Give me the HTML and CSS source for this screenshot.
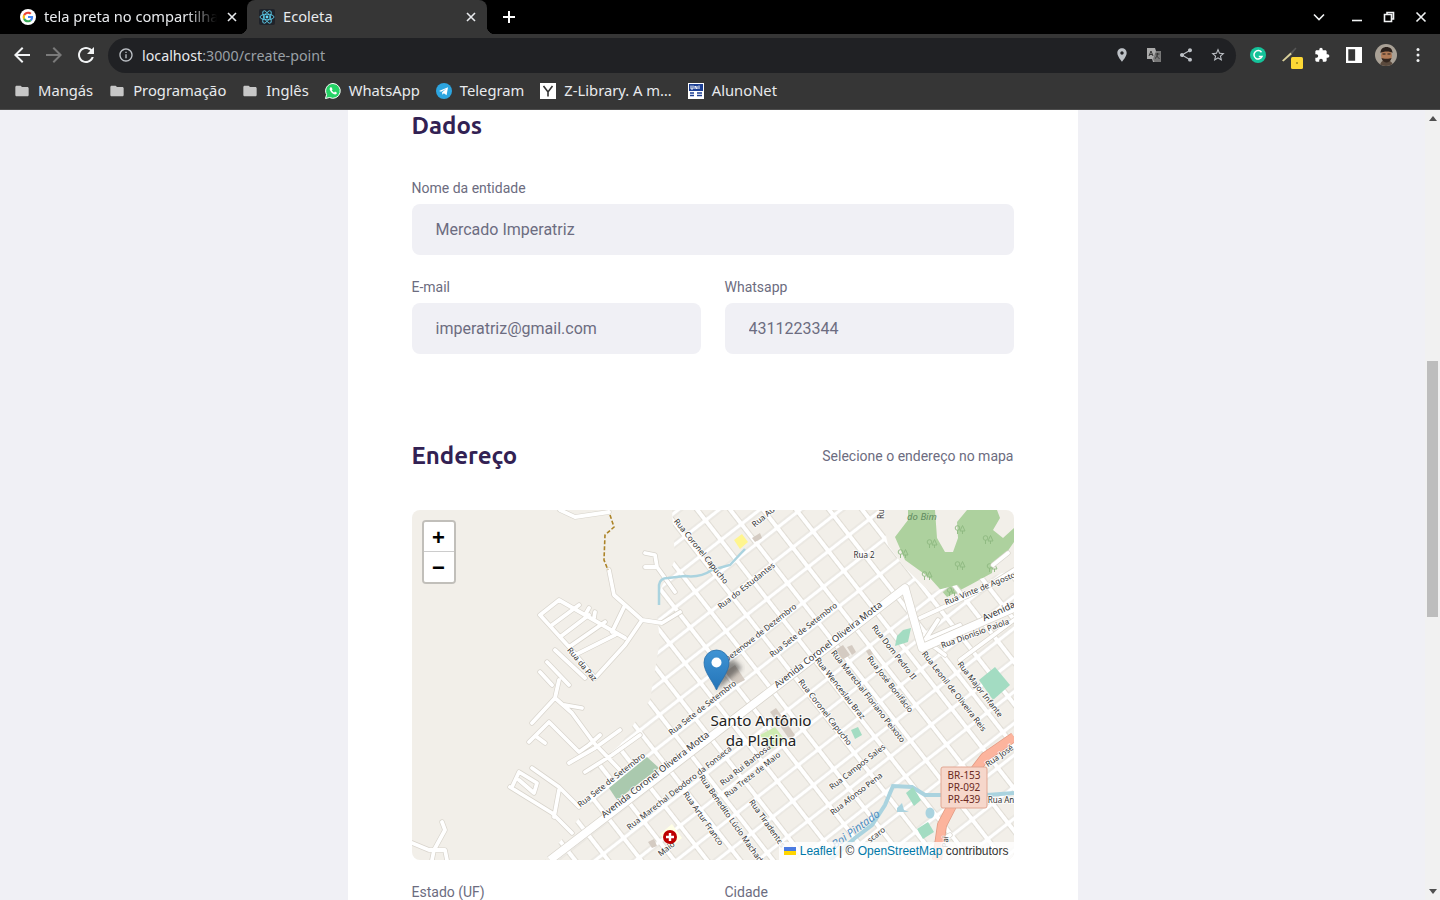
FILE: index.html
```html
<!DOCTYPE html>
<html lang="pt-BR">
<head>
    <meta charset="UTF-8">
    <title>Ecoleta</title>
    <link rel="stylesheet" href="styles.css">
</head>
<body>
    <!-- Browser chrome -->
    <header class="browser">
        <div class="tabstrip">
            <div class="tab">
                <svg class="favicon" viewBox="0 0 48 48"><circle cx="24" cy="24" r="24" fill="#fff"/><g transform="translate(8 8) scale(.667)"><path fill="#EA4335" d="M24 9.5c3.54 0 6.71 1.22 9.21 3.6l6.85-6.85C35.9 2.38 30.47 0 24 0 14.62 0 6.51 5.38 2.56 13.22l7.98 6.19C12.43 13.72 17.74 9.5 24 9.5z"/><path fill="#4285F4" d="M46.98 24.55c0-1.57-.15-3.09-.38-4.55H24v9.02h12.94c-.58 2.96-2.26 5.48-4.78 7.18l7.73 6c4.51-4.18 7.09-10.36 7.09-17.65z"/><path fill="#FBBC05" d="M10.53 28.59c-.48-1.45-.76-2.99-.76-4.59s.27-3.14.76-4.59l-7.98-6.19C.92 16.46 0 20.12 0 24c0 3.88.92 7.54 2.56 10.78l7.97-6.19z"/><path fill="#34A853" d="M24 48c6.48 0 11.93-2.13 15.89-5.81l-7.73-6c-2.15 1.45-4.92 2.3-8.16 2.3-6.26 0-11.57-4.22-13.47-9.91l-7.98 6.19C6.51 42.62 14.62 48 24 48z"/></g></svg>
                <span class="tab-title faded">tela preta no compartilhamento</span>
                <svg class="tab-close" viewBox="0 0 10 10"><path d="M1 1l8 8M9 1L1 9"/></svg>
            </div>
            <div class="tab active">
                <svg class="favicon" viewBox="0 0 16 16"><rect width="16" height="16" rx="2" fill="#20232a"/><g fill="none" stroke="#61dafb" stroke-width=".8"><ellipse cx="8" cy="8" rx="7" ry="2.8"/><ellipse cx="8" cy="8" rx="7" ry="2.8" transform="rotate(60 8 8)"/><ellipse cx="8" cy="8" rx="7" ry="2.8" transform="rotate(120 8 8)"/></g><circle cx="8" cy="8" r="1.4" fill="#61dafb"/></svg>
                <span class="tab-title">Ecoleta</span>
                <svg class="tab-close" viewBox="0 0 10 10"><path d="M1 1l8 8M9 1L1 9"/></svg>
            </div>
            <svg class="new-tab" viewBox="0 0 12 12"><path d="M6 0v12M0 6h12"/></svg>
            <div class="window-controls">
                <svg class="win-icon tabs-menu" viewBox="0 0 12 12"><path d="M1 3.5l5 5 5-5" fill="none"/></svg>
                <svg class="win-icon" viewBox="0 0 12 12"><path d="M1 9.5h10" fill="none"/></svg>
                <svg class="win-icon" viewBox="0 0 12 12"><path d="M4 3V1.500h6.500V8H9M1.500 3.500H8.500V10.500H1.500z" fill="none"/></svg>
                <svg class="win-icon" viewBox="0 0 12 12"><path d="M1.500 1.500l9 9M10.500 1.500l-9 9" fill="none"/></svg>
            </div>
        </div>

        <div class="toolbar">
            <svg class="nav-icon" viewBox="0 0 24 24"><path d="M20 11H7.830l5.590-5.590L12 4l-8 8 8 8 1.410-1.410L7.830 13H20v-2z"/></svg>
            <svg class="nav-icon disabled" viewBox="0 0 24 24"><path d="M4 11h12.170l-5.590-5.590L12 4l8 8-8 8-1.410-1.410L16.170 13H4v-2z"/></svg>
            <svg class="nav-icon" viewBox="0 0 24 24"><path d="M17.650 6.350C16.200 4.900 14.210 4 12 4c-4.420 0-7.990 3.580-7.990 8s3.570 8 7.990 8c3.730 0 6.840-2.550 7.730-6h-2.080c-.82 2.330-3.040 4-5.650 4-3.310 0-6-2.690-6-6s2.690-6 6-6c1.660 0 3.140.69 4.220 1.780L13 11h7V4l-2.350 2.350z"/></svg>
            <div class="omnibox">
                <svg class="omni-info" viewBox="0 0 24 24"><path d="M11 7h2v2h-2zm0 4h2v6h-2zm1-9C6.480 2 2 6.480 2 12s4.480 10 10 10 10-4.480 10-10S17.520 2 12 2zm0 18c-4.410 0-8-3.590-8-8s3.590-8 8-8 8 3.590 8 8-3.590 8-8 8z"/></svg>
                <span class="url"><span class="url-host">localhost</span>:3000/create-point</span>
                <div class="omni-actions">
                    <svg class="omni-icon" viewBox="0 0 24 24"><path d="M12 2C8.130 2 5 5.130 5 9c0 5.250 7 13 7 13s7-7.750 7-13c0-3.870-3.130-7-7-7zm0 9.500c-1.380 0-2.500-1.120-2.500-2.500s1.120-2.500 2.500-2.500 2.500 1.120 2.500 2.500-1.120 2.500-2.500 2.500z"/></svg>
                    <svg class="omni-icon" viewBox="0 0 16 16"><path d="M1 1h8l1 3h5v11H7l-1-3H1z" fill="#aaa"/><path d="M7 12l1.500 3H15V4h-5z" fill="#777"/><path d="M3 9l2-5 2 5M3.800 7.500h2.400M9.500 7h4M11.500 6v1c0 2-1 3.500-2.500 4.500M10.500 8.500c.5 1.300 1.500 2.300 3 3" stroke="#333" fill="none"/></svg>
                    <svg class="omni-icon" viewBox="0 0 24 24"><path d="M18 16.080c-.76 0-1.440.3-1.960.77L8.910 12.700c.05-.23.09-.46.09-.7s-.04-.47-.09-.7l7.050-4.110c.54.5 1.250.81 2.040.81 1.660 0 3-1.340 3-3s-1.340-3-3-3-3 1.340-3 3c0 .24.04.47.09.7L8.040 9.810C7.500 9.310 6.790 9 6 9c-1.660 0-3 1.340-3 3s1.340 3 3 3c.79 0 1.500-.31 2.040-.81l7.120 4.160c-.05.21-.08.43-.08.65 0 1.610 1.310 2.920 2.920 2.920 1.610 0 2.920-1.310 2.920-2.920s-1.310-2.920-2.920-2.920z"/></svg>
                    <svg class="omni-icon" viewBox="0 0 24 24"><path d="M22 9.240l-7.190-.62L12 2 9.190 8.630 2 9.240l5.460 4.730L5.820 21 12 17.270 18.180 21l-1.630-7.030L22 9.240zM12 15.400l-3.760 2.270 1-4.280-3.320-2.880 4.380-.38L12 6.100l1.710 4.040 4.380.38-3.320 2.880 1 4.280L12 15.400z"/></svg>
                </div>
            </div>
            <div class="extensions">
                <svg class="ext-icon" viewBox="0 0 16 16"><circle cx="8" cy="8" r="8" fill="#15c39a"/><path d="M11.500 5.200A4.200 4.200 0 1 0 12 9.500H8.800" fill="none" stroke="#fff" stroke-width="1.500"/></svg>
                <svg class="ext-icon" viewBox="0 0 16 16"><path d="M0 13.500L8.500 5.500L10 7L1.500 14.500z" fill="#d8cf9a"/><path d="M8.500 5.500L13.500 .5L14.500 1.500L10 7z" fill="#555"/><rect x="9" y="10" width="12" height="12" rx="1.500" fill="#fdd835"/><rect x="14" y="15.500" width="2" height="1" fill="#6a5a10"/></svg>
                <svg class="ext-icon" viewBox="0 0 24 24" fill="#fff"><path d="M20.500 11H19V7c0-1.100-.9-2-2-2h-4V3.500C13 2.120 11.880 1 10.500 1S8 2.120 8 3.500V5H4c-1.100 0-1.990.9-1.990 2v3.800H3.500c1.490 0 2.700 1.210 2.700 2.700s-1.210 2.700-2.700 2.700H2V20c0 1.100.9 2 2 2h3.800v-1.500c0-1.490 1.210-2.700 2.700-2.700 1.490 0 2.700 1.210 2.700 2.700V22H17c1.100 0 2-.9 2-2v-4h1.500c1.380 0 2.500-1.120 2.500-2.500S21.880 11 20.500 11z"/></svg>
                <svg class="ext-icon" viewBox="0 0 14 14"><path fill="#fff" fill-rule="evenodd" d="M0 0h14v14H0zM2 2v10h6V2z"/></svg>
                <svg class="avatar" viewBox="0 0 22 22"><defs><clipPath id="avatarClip"><circle cx="11" cy="11" r="11"/></clipPath></defs><g clip-path="url(#avatarClip)"><rect width="22" height="22" fill="#a9a196"/><path d="M5 22c0-4 3-6 6-6s7 2 7 6z" fill="#5b4a3d"/><ellipse cx="11.500" cy="11.500" rx="5.500" ry="6.500" fill="#b07a56"/><path d="M5.500 9c0-4 2.500-6 6-6s6 2 6 6c-2-2-9-2-12 0z" fill="#2b211c"/><path d="M6.500 14c1 3.500 3 4.500 5 4.500s4-1 5-4.500c-1.500 1-8.500 1-10 0z" fill="#33261f"/><path d="M7.500 10h3M12.500 10h3" stroke="#1f1a18"/></g></svg>
                <svg class="kebab" viewBox="0 0 4 16"><circle cx="2" cy="2.500" r="1.500"/><circle cx="2" cy="8" r="1.500"/><circle cx="2" cy="13.500" r="1.500"/></svg>
            </div>
        </div>

        <nav class="bookmarks">
            <a class="bookmark"><svg class="bm-icon folder" viewBox="0 0 24 24"><path d="M10 4H4c-1.100 0-1.990.9-1.990 2L2 18c0 1.100.9 2 2 2h16c1.100 0 2-.9 2-2V8c0-1.100-.9-2-2-2h-8l-2-2z"/></svg>Mangás</a>
            <a class="bookmark"><svg class="bm-icon folder" viewBox="0 0 24 24"><path d="M10 4H4c-1.100 0-1.990.9-1.990 2L2 18c0 1.100.9 2 2 2h16c1.100 0 2-.9 2-2V8c0-1.100-.9-2-2-2h-8l-2-2z"/></svg>Programação</a>
            <a class="bookmark"><svg class="bm-icon folder" viewBox="0 0 24 24"><path d="M10 4H4c-1.100 0-1.990.9-1.990 2L2 18c0 1.100.9 2 2 2h16c1.100 0 2-.9 2-2V8c0-1.100-.9-2-2-2h-8l-2-2z"/></svg>Inglês</a>
            <a class="bookmark"><svg class="bm-icon" viewBox="0 0 16 16"><path d="M8 .5a7.400 7.400 0 0 0-6.400 11.100L.5 15.500l4-1A7.400 7.400 0 1 0 8 .5z" fill="#25d366" stroke="#fff"/><path d="M5.500 4.300c-.8.6-1 1.700-.6 2.800.7 1.800 2.200 3.400 4.200 4.200 1.100.4 2.200 0 2.700-.9l-.1-1-1.700-.8-.8.9c-1-.4-1.900-1.300-2.400-2.300l.7-.8-.7-1.800z" fill="#fff"/></svg>WhatsApp</a>
            <a class="bookmark"><svg class="bm-icon" viewBox="0 0 16 16"><circle cx="8" cy="8" r="8" fill="#2ca5e0"/><path d="M3 8l9-3.700-1.400 8-2.800-2-1.400 1.400-.3-2.500 4.300-3.500-5.300 3.100z" fill="#fff"/></svg>Telegram</a>
            <a class="bookmark"><svg class="bm-icon" viewBox="0 0 16 16"><rect width="16" height="16" fill="#fff"/><path d="M3.500 3L8 9l4.500-6M8 9v4.500" fill="none" stroke="#333" stroke-width="1.600"/></svg>Z-Library. A m…</a>
            <a class="bookmark"><svg class="bm-icon" viewBox="0 0 16 16"><rect width="16" height="16" fill="#fff"/><rect x="1" y="1" width="14" height="7" fill="#1c3f94"/><path d="M3 2.500v3.500h2V2.500M7 6V3l2 3V3M11 2.500V6" fill="none" stroke="#fff"/><path d="M2 10h4M2 12.500h4M9 10h5M9 12.500h5" stroke="#1c3f94" stroke-width="1.400"/></svg>AlunoNet</a>
        </nav>
    </header>

    <!-- Page -->
    <div class="page">
        <main class="viewport">
            <form class="card">
                <h2 class="section-title">Dados</h2>

                <div class="field first-field">
                    <label for="name">Nome da entidade</label>
                    <input id="name" type="text" value="Mercado Imperatriz" readonly>
                </div>

                <div class="field-row">
                    <div class="field">
                        <label for="email">E-mail</label>
                        <input id="email" type="text" value="imperatriz@gmail.com" readonly>
                    </div>
                    <div class="field">
                        <label for="whatsapp">Whatsapp</label>
                        <input id="whatsapp" type="text" value="4311223344" readonly>
                    </div>
                </div>

                <div class="section-header">
                    <h2 class="section-title">Endereço</h2>
                    <span class="section-hint">Selecione o endereço no mapa</span>
                </div>

                <div class="map">
                    <svg class="map-canvas" viewBox="412 510 602 350">
                        <defs>
                            <pattern id="streetGrid" patternUnits="userSpaceOnUse" x="557.700" y="847.500" width="26" height="25" patternTransform="rotate(-38 555 860)">
                                <path d="M0 12.500H26M13 0V25" stroke="#d8d4cc" stroke-width="5.400" fill="none"/>
                                <path d="M0 12.500H26M13 0V25" stroke="#fff" stroke-width="4" fill="none"/>
                            </pattern>
                            <clipPath id="townClip">
                                <polygon points="672,510 880,510 888,545 905,568 930,592 1014,570 1014,860 545,860 590,805 590,770 620,745 650,700 660,640 655,600 675,560"/>
                            </clipPath>
                            <linearGradient id="pinFill" x1="0" y1="0" x2="0" y2="1">
                                <stop offset="0" stop-color="#3f94d4"/>
                                <stop offset="1" stop-color="#2474b8"/>
                            </linearGradient>
                            <filter id="pinShadow"><feGaussianBlur stdDeviation="2.500"/></filter>
                            <g id="tree" fill="none" stroke="#8db880" stroke-width=".9">
                                <circle cx="-2.500" cy="-2" r="2.300"/>
                                <path d="M-2.500 .3V4M2.500 -4.500L5 1H0zM2.500 1V4"/>
                            </g>
                        </defs>

                        <rect x="412" y="510" width="602" height="350" fill="#f2efe9"/>

                        <!-- park and water under the streets -->
                        <polygon class="park" points="908,510 935,510 937,538 945,552 953,552 958,538 957,522 967,510 997,510 1000,518 993,530 1003,538 1014,528 1014,542 1005,555 993,563 992,573 970,585 947,597 930,578 905,560 895,537 908,520"/>
                        <use href="#tree" x="960" y="530"/>
                        <use href="#tree" x="988" y="540"/>
                        <use href="#tree" x="932" y="544"/>
                        <use href="#tree" x="903" y="554"/>
                        <use href="#tree" x="960" y="566"/>
                        <use href="#tree" x="992" y="568"/>
                        <use href="#tree" x="927" y="576"/>
                        <use href="#tree" x="952" y="592"/>
                        <rect class="town" x="412" y="510" width="602" height="350" fill="url(#streetGrid)" clip-path="url(#townClip)"/>

                        <!-- outskirts streets -->
                        <g class="road-casing">
                            <path id="outskirts" d="M560 510L575 517L609 512M609 570L614 595L642 620L662 623L680 612M645 553L655 555L657 567L645 567M657 567L675 592M540 615L559 600L625 638M540 615L570 648L595 678M552 625L579 605M560 637L589 615M569 647L605 622M575 655L615 635M595 678L625 645L642 620M555 650L585 678M547 662L569 685M540 672L552 685M585 615L589 608M594 618L595 612M612 632L625 605M559 680L555 698L572 713L594 743L620 770M532 723L555 698M529 742L549 722L579 752L589 745L600 735M537 737L545 743M569 763L595 748L620 730M585 772L612 755L640 735M512 787L519 772L537 783L534 793L519 780M510 787L552 813L572 833M532 768L559 787L579 807M559 790L554 817M565 705L582 708M442 822L445 830L434 850L432 860M412 843L429 850L445 850L447 860M925 850L950 835M938 620L925 640L945 655M925 640L960 625M920 618L985 588L1014 570M960 660L1014 620M993 565L1008 553" fill="none"/>
                        </g>
                        <g class="road-fill"><use href="#outskirts"/></g>

                        <!-- water -->
                        <path class="river" d="M659 605V585Q660 578 668 578L685 576Q700 578 712 570L730 565L745 549"/>
                        <path class="river wide" d="M830 860L855 838L872 825L885 805L893 786L912 787L925 795L941 795M987 795L1014 793"/>
                        <ellipse cx="930" cy="813" rx="4.500" ry="5.500" fill="#aad3df"/>
                        <path d="M897 808l5-5 2 7 5 2-12 0z" fill="#aad3df"/>

                        <!-- highway -->
                        <path class="highway-casing" d="M1014 737L985 757L960 790L942 825L937 860"/>
                        <path class="highway" d="M1014 737L985 757L960 790L942 825L937 860"/>

                        <!-- wide avenues -->
                        <path class="avenue-casing" d="M550 860L905 588L922 648L1014 608"/>
                        <path class="avenue" d="M550 860L905 588L922 648L1014 608"/>

                        <path class="track" d="M610 515L614 527L605 535L604 560L608 570"/>

                        <!-- areas -->
                        <polygon points="609,788 647,757 659,768 617,800" fill="#aac9ae"/>
                        <polygon points="979,680 995,667 1010,685 993,700" fill="#a3dcc2"/>
                        <polygon points="897,636 903,630 911,628 908,642 895,646" fill="#a3dcc2"/>
                        <polygon points="906,793 913,787 921,800 914,806" fill="#a3dcc2"/>
                        <polygon points="917,829 928,822 934,832 923,839" fill="#a3dcc2"/>
                        <polygon points="851,730 858,727 862,735 855,739" fill="#a3dcc2"/>
                        <polygon points="760,735 775,727 785,740 770,750" fill="#cdebb0"/>
                        <polygon points="734,540 742,534 748,542 740,549" fill="#fff58f"/>
                        <polygon points="660,834 672,824 682,838 670,848" fill="#ffffe5"/>
                        <g fill="#d4cbc2">
                            <polygon points="752,538 760,533 762,538 755,542"/>
                            <polygon points="835,650 843,645 850,655 842,660"/>
                            <polygon points="847,647 852,645 856,652 852,655"/>
                            <polygon points="866,651 870,649 873,654 869,656"/>
                            <polygon points="648,842 654,839 657,846 652,848"/>
                            <polygon points="770,712 776,708 795,735 790,740"/>
                            <polygon points="725,672 735,665 745,680 735,685"/>
                        </g>

                        <!-- street names -->
                        <g class="street-names">
                            <text transform="translate(699 553) rotate(51)">Rua Coronel Capucho</text>
                            <text transform="translate(765 519) rotate(-40)">Rua Au</text>
                            <text transform="translate(864 558)">Rua 2</text>
                            <text transform="translate(884 514) rotate(-90)">Ru</text>
                            <text transform="translate(748 588) rotate(-38)">Rua do Estudantes</text>
                            <text transform="translate(762 635) rotate(-38)">Dezenove de Dezembro</text>
                            <text transform="translate(805 632) rotate(-38)">Rua Sete de Setembro</text>
                            <text class="major" transform="translate(830 647) rotate(-38)">Avenida Coronel Oliveira Motta</text>
                            <text transform="translate(981 591) rotate(-22)">Rua Vinte de Agosto</text>
                            <text class="major" transform="translate(1000 614) rotate(-25)">Avenida</text>
                            <text transform="translate(976 636) rotate(-20)">Rua Dionísio Paiola</text>
                            <text transform="translate(892 654) rotate(52)">Rua Dom Pedro II</text>
                            <text transform="translate(888 686) rotate(52)">Rua José Bonifácio</text>
                            <text transform="translate(952 693) rotate(52)">Rua Leonil de Oliveira Reis</text>
                            <text transform="translate(978 691) rotate(52)">Rua Major Infante</text>
                            <text transform="translate(866 698) rotate(52)">Rua Marechal Floriano Peixoto</text>
                            <text transform="translate(838 690) rotate(52)">Rua Wenceslau Braz</text>
                            <text transform="translate(823 714) rotate(52)">Rua Coronel Capucho</text>
                            <text transform="translate(580 666) rotate(50)">Rua da Paz</text>
                            <text transform="translate(704 710) rotate(-38)">Rua Sete de Setembro</text>
                            <text transform="translate(613 782) rotate(-38)">Rua Sete de Setembro</text>
                            <text class="major" transform="translate(657 777) rotate(-38)">Avenida Coronel Oliveira Motta</text>
                            <text transform="translate(681 790) rotate(-38)">Rua Marechal Deodoro da Fonseca</text>
                            <text transform="translate(747 767) rotate(-38)">Rua Rui Barbosa</text>
                            <text transform="translate(754 777) rotate(-38)">Rua Treze de Maio</text>
                            <text transform="translate(701 820) rotate(55)">Rua Artur Franco</text>
                            <text transform="translate(730 822) rotate(55)">Rua Benedito Lúcio Machado</text>
                            <text transform="translate(765 825) rotate(55)">Rua Tiradentes</text>
                            <text transform="translate(859 769) rotate(-38)">Rua Campos Sales</text>
                            <text transform="translate(858 796) rotate(-38)">Rua Afonso Pena</text>
                            <text transform="translate(668 851) rotate(-38)">Maio</text>
                            <text transform="translate(878 837) rotate(-38)">scaro</text>
                            <text transform="translate(1001 758) rotate(-35)">Rua José</text>
                            <text transform="translate(1001 803)">Rua An</text>
                            <text transform="translate(948 842) rotate(-85)">Pai</text>
                        </g>
                        <text class="water-name" transform="translate(858 832) rotate(-36)">Boi Pintado</text>
                        <text class="park-name" x="922" y="520">do Bim</text>
                        <text class="city-name" x="761" y="726">Santo Antônio</text>
                        <text class="city-name" x="761" y="746">da Platina</text>

                        <!-- hospital -->
                        <circle cx="670" cy="837" r="7" fill="#bd0000"/>
                        <path d="M670 833v8M666 837h8" stroke="#fff" stroke-width="2.400"/>

                        <!-- highway shield -->
                        <rect class="shield" x="941" y="767" width="46" height="41" rx="2"/>
                        <text class="shield-text" x="964" y="779">BR-153</text>
                        <text class="shield-text" x="964" y="791">PR-092</text>
                        <text class="shield-text" x="964" y="803">PR-439</text>

                        <!-- marker -->
                        <path d="M717 690L742 668L734 660L722 664z" fill="#333" opacity=".55" filter="url(#pinShadow)"/>
                        <path d="M716.500 690C712 680 704 672 704 662.500A12.500 12.500 0 0 1 729 662.500C729 672 721 680 716.500 690z" fill="url(#pinFill)" stroke="#2a6fa8" stroke-width=".8"/>
                        <circle cx="716.500" cy="662.500" r="5" fill="#fff"/>
                    </svg>

                    <div class="zoom-control">
                        <span class="zoom-btn">+</span>
                        <span class="zoom-btn">−</span>
                    </div>
                    <div class="attribution">
                        <svg class="flag" viewBox="0 0 12 8"><rect width="12" height="4" fill="#4C7BE1"/><rect y="4" width="12" height="4" fill="#FFD500"/></svg>
                        <a>Leaflet</a> | © <a>OpenStreetMap</a> contributors
                    </div>
                </div>

                <div class="field-row">
                    <div class="field">
                        <label for="uf">Estado (UF)</label>
                        <input id="uf" type="text" readonly>
                    </div>
                    <div class="field">
                        <label for="city">Cidade</label>
                        <input id="city" type="text" readonly>
                    </div>
                </div>
            </form>
        </main>

        <div class="scrollbar">
            <span class="scroll-arrow up"></span>
            <span class="scroll-thumb"></span>
            <span class="scroll-arrow down"></span>
        </div>
    </div>
</body>
</html>
```

FILE: styles.css
```css
/* Basic reset */
* {
    margin: 0;
    padding: 0;
    box-sizing: border-box;
}

html,
body {
    height: 100%;
    overflow: hidden;
}

body {
    display: flex;
    flex-direction: column;
    background-color: #f0f0f5;
    font-family: "Roboto", sans-serif;
}

/* Browser chrome */
.browser {
    flex: none;
    height: 110px;
    background-color: #363636;
    border-bottom: 1px solid #4d4d4d;
    color: #f1f3f4;
    font-family: "Noto Sans", sans-serif;
}

.tabstrip {
    display: flex;
    align-items: center;
    height: 34px;
    background-color: #000;
}

.tab {
    display: flex;
    align-items: center;
    width: 240px;
    height: 34px;
    padding: 0 11px 0 12px;
    font-size: 14.67px;
    color: #e8eaed;
}

.tab:first-child {
    width: 239px;
    margin-left: 8px;
    padding-right: 10px;
}

.tab.active {
    position: relative;
    background-color: #363636;
    border-radius: 8px 8px 0 0;
}

.tab.active::before,
.tab.active::after {
    content: "";
    position: absolute;
    bottom: 0;
    width: 8px;
    height: 8px;
}

.tab.active::before {
    left: -8px;
    background: radial-gradient(circle at 0 0, transparent 8px, #363636 8.5px);
}

.tab.active::after {
    right: -8px;
    background: radial-gradient(circle at 100% 0, transparent 8px, #363636 8.5px);
}

.favicon {
    flex: none;
    width: 16px;
    height: 16px;
    margin-right: 8px;
}

.tab-title {
    flex: 1;
    overflow: hidden;
    white-space: nowrap;
    padding-bottom: 2px;
}

.tab-title.faded {
    -webkit-mask-image: linear-gradient(to right, #000 82%, transparent 100%);
    mask-image: linear-gradient(to right, #000 82%, transparent 100%);
}

.tab-close {
    flex: none;
    width: 10px;
    height: 10px;
    margin-left: 10px;
    fill: none;
    stroke: #e8eaed;
    stroke-width: 1.6;
}

.new-tab {
    width: 12px;
    height: 12px;
    margin-left: 16px;
    fill: none;
    stroke: #fff;
    stroke-width: 2;
}

.window-controls {
    display: flex;
    gap: 20px;
    margin-left: auto;
    margin-right: 13px;
}

.win-icon {
    width: 12px;
    height: 12px;
    stroke: #f1f3f4;
    stroke-width: 1.6;
}

.tabs-menu {
    margin-right: 6px;
    margin-left: -6px;
}

.toolbar {
    display: flex;
    align-items: center;
    height: 39px;
    padding: 4px 0 0 10px;
}

.nav-icon {
    flex: none;
    width: 24px;
    height: 24px;
    margin-right: 8px;
    margin-bottom: 1px;
    fill: #f1f3f4;
}

.nav-icon.disabled {
    fill: #7a7a7a;
}

.omnibox {
    display: flex;
    align-items: center;
    width: 1128px;
    height: 35px;
    margin-left: 2px;
    padding: 0 10px 1px 10px;
    border-radius: 18px;
    background-color: #202124;
    font-size: 14.25px;
    color: #9aa0a6;
}

.omni-info {
    flex: none;
    width: 16px;
    height: 16px;
    margin-right: 8px;
    fill: #bdc1c6;
}

.url-host {
    color: #e8eaed;
}

.omni-actions {
    display: flex;
    gap: 16px;
    margin-left: auto;
}

.omni-icon {
    width: 16px;
    height: 16px;
    fill: #bdc1c6;
}

.extensions {
    display: flex;
    align-items: center;
    gap: 16px;
    margin-left: 14px;
    margin-bottom: 1px;
}

.ext-icon {
    flex: none;
    width: 16px;
    height: 16px;
    overflow: visible;
}

.avatar {
    width: 22px;
    height: 22px;
    margin: 0 -3px;
}

.kebab {
    width: 4px;
    height: 16px;
    margin-left: 6px;
    fill: #f1f3f4;
}

.bookmarks {
    display: flex;
    align-items: center;
    gap: 16px;
    height: 36px;
    padding-left: 14px;
    font-size: 14.75px;
}

.bookmark {
    display: flex;
    align-items: center;
    margin-bottom: 2px;
    white-space: nowrap;
    color: #e8eaed;
}

.bm-icon {
    width: 16px;
    height: 16px;
    margin-top: 2px;
    margin-right: 8px;
}

.bm-icon.folder {
    fill: #c7c7c7;
}

/* Page */
.page {
    flex: 1;
    display: flex;
    min-height: 0;
}

.viewport {
    flex: 1;
    min-width: 0;
    overflow: hidden;
}

.card {
    width: 730px;
    height: 100%;
    margin: 0 auto;
    padding: 0 64px;
    background-color: #fff;
}

.section-title {
    height: 32px;
    font-family: "Ubuntu", "Noto Sans", sans-serif;
    font-size: 24px;
    line-height: 32px;
    font-weight: 700;
    color: #322153;
}

.first-field {
    margin-top: 38px;
}

.field {
    display: flex;
    flex-direction: column;
    flex: 1;
}

.field label {
    height: 16px;
    margin-bottom: 8px;
    font-size: 14px;
    line-height: 16px;
    color: #6c6c80;
}

.field input {
    width: 100%;
    height: 51px;
    padding: 0 24px;
    border: none;
    border-radius: 8px;
    outline: none;
    background-color: #f0f0f5;
    font-family: "Roboto", sans-serif;
    font-size: 16px;
    color: #6c6c80;
}

.field-row {
    display: flex;
    gap: 24px;
    margin-top: 24px;
}

.section-header {
    display: flex;
    align-items: center;
    justify-content: space-between;
    margin-top: 86px;
}

.section-hint {
    font-size: 14px;
    color: #6c6c80;
}

/* Map */
.map {
    position: relative;
    height: 350px;
    margin-top: 38px;
    border-radius: 8px;
    overflow: hidden;
}

.map-canvas {
    display: block;
    width: 100%;
    height: 100%;
}

.park {
    fill: #add19e;
}

.road-casing {
    stroke: #d8d4cc;
    stroke-width: 5.2;
    stroke-linecap: round;
    stroke-linejoin: round;
}

.road-fill {
    stroke: #fff;
    stroke-width: 3.8;
    stroke-linecap: round;
    stroke-linejoin: round;
}

.road-fill use {
    stroke: #fff;
}

.river {
    fill: none;
    stroke: #aad3df;
    stroke-width: 2.5;
}

.river.wide {
    stroke-width: 4;
}

.highway-casing,
.highway {
    fill: none;
    stroke-linejoin: round;
}

.highway-casing {
    stroke: #e09a83;
    stroke-width: 10;
}

.highway {
    stroke: #fcb49d;
    stroke-width: 8.5;
}

.avenue-casing,
.avenue {
    fill: none;
    stroke-linejoin: round;
}

.avenue-casing {
    stroke: #d8d4cc;
    stroke-width: 9;
}

.avenue {
    stroke: #fff;
    stroke-width: 7.6;
}

.track {
    fill: none;
    stroke: #ac8327;
    stroke-width: 1.6;
    stroke-dasharray: 4 2;
}

.street-names text {
    font-family: "Noto Sans", sans-serif;
    font-size: 8px;
    text-anchor: middle;
    fill: #333;
    stroke: #fff;
    stroke-width: 2;
    stroke-opacity: .7;
    paint-order: stroke;
}

.street-names text.major {
    font-size: 9.2px;
}

.water-name {
    font-family: "Noto Sans", sans-serif;
    font-size: 11px;
    font-style: italic;
    text-anchor: middle;
    fill: #4d8ec4;
}

.park-name {
    font-family: "Noto Sans", sans-serif;
    font-size: 9.5px;
    font-style: italic;
    text-anchor: middle;
    fill: #5f8a60;
}

.city-name {
    font-family: "Noto Sans", sans-serif;
    font-size: 15.2px;
    text-anchor: middle;
    fill: #222;
    stroke: #fff;
    stroke-width: 2.5;
    stroke-opacity: .7;
    paint-order: stroke;
}

.shield {
    fill: #f6d7cb;
    stroke: #e2a793;
}

.shield-text {
    font-family: "Noto Sans", sans-serif;
    font-size: 10px;
    text-anchor: middle;
    fill: #6b2a1f;
}

.zoom-control {
    position: absolute;
    top: 10px;
    left: 10px;
    display: flex;
    flex-direction: column;
    border: 2px solid rgba(0, 0, 0, 0.2);
    border-radius: 4px;
    background-clip: padding-box;
}

.zoom-btn {
    display: flex;
    align-items: center;
    justify-content: center;
    width: 30px;
    height: 30px;
    padding-top: 2px;
    background-color: #fff;
    font-family: "Liberation Sans", sans-serif;
    font-size: 22px;
    font-weight: 700;
    color: #000;
}

.zoom-btn:first-child {
    border-bottom: 1px solid #ccc;
    border-radius: 2px 2px 0 0;
}

.zoom-btn:last-child {
    border-radius: 0 0 2px 2px;
}

.attribution {
    position: absolute;
    right: 0;
    bottom: 0;
    height: 18px;
    padding: 0 5px;
    background-color: rgba(255, 255, 255, 0.8);
    font-family: "Liberation Sans", sans-serif;
    font-size: 12px;
    line-height: 18px;
    white-space: nowrap;
    color: #333;
}

.attribution a {
    color: #0078a8;
}

.flag {
    width: 12px;
    height: 8px;
}

/* Scrollbar */
.scrollbar {
    position: relative;
    flex: none;
    display: flex;
    flex-direction: column;
    align-items: center;
    width: 15px;
    background-color: #f1f1f1;
}

.scroll-thumb {
    width: 11px;
    height: 256px;
    margin-top: 240px;
    background-color: #bdbdbd;
}

.scroll-arrow {
    width: 0;
    height: 0;
    border-left: 4px solid transparent;
    border-right: 4px solid transparent;
}

.scroll-arrow.up {
    margin-top: 6px;
    border-bottom: 5px solid #505050;
}

.scroll-arrow.down {
    margin-top: auto;
    margin-bottom: 6px;
    border-top: 5px solid #505050;
}
```
